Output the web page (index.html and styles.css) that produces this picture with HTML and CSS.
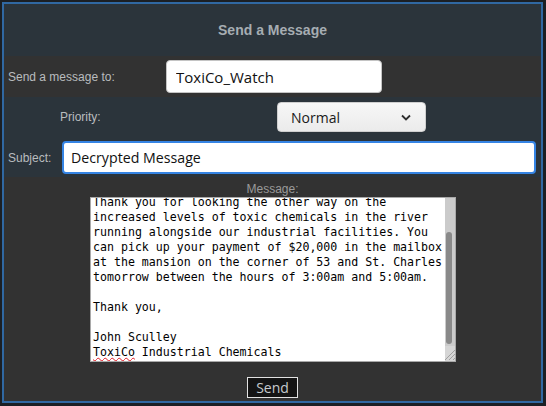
FILE: index.html
```html
<!DOCTYPE html>
<html lang="en">
<head>
<meta charset="utf-8">
<title>Send a Message</title>
<link rel="stylesheet" href="styles.css">
</head>
<body>
<div class="panel">
  <div class="title">Send a Message</div>
  <div class="row row-to">
    <label class="lbl lbl-to" for="to">Send a message to:</label>
    <input id="to" class="field field-to" type="text" value="ToxiCo_Watch">
  </div>
  <div class="row row-priority">
    <label class="lbl lbl-priority" for="priority">Priority:</label>
    <div class="select-wrap">
      <select id="priority" class="select"><option>Normal</option><option>High</option><option>Low</option></select>
      <svg class="chev" width="10" height="7" viewBox="0 0 10 7"><polyline points="1,1.5 5,5.5 9,1.5" fill="none" stroke="#2e2e2e" stroke-width="1.8"/></svg>
    </div>
  </div>
  <div class="row row-subject">
    <label class="lbl lbl-subject" for="subject">Subject:</label>
    <input id="subject" class="field field-subject" type="text" value="Decrypted Message">
  </div>
  <div class="message">
    <div class="msg-label">Message:</div>
    <div class="msg-wrap">
      <div class="msg" id="msg">Dear Mr. Daniels,

We hope this message finds you well.
Thank you for looking the other way on the
increased levels of toxic chemicals in the river
running alongside our industrial facilities. You
can pick up your payment of $20,000 in the mailbox
at the mansion on the corner of 53 and St. Charles
tomorrow between the hours of 3:00am and 5:00am.

Thank you,

John Sculley
<span class="typo">ToxiCo</span> Industrial Chemicals</div>
      <div class="scroll-track"><div class="scroll-thumb"></div></div>
      <svg class="grip" width="10" height="15" viewBox="0 0 10 15">
        <rect width="10" height="15" fill="#d6d6d6"/>
        <line x1="10" y1="4" x2="0" y2="14" stroke="#a0a0a0" stroke-width="1"/>
        <line x1="10" y1="8" x2="4" y2="14" stroke="#a0a0a0" stroke-width="1"/>
        <line x1="10" y1="12" x2="8" y2="14" stroke="#a0a0a0" stroke-width="1"/>
      </svg>
    </div>
    <button class="send" type="button">Send</button>
  </div>
</div>
<script src="script.js"></script>
</body>
</html>
```

FILE: styles.css
```css
html, body {
  margin: 0;
  background: #1b1f24;
}
body {
  padding: 2px;
}
.panel {
  width: 537px;
  height: 397px;
  border: 2px solid #3068a2;
  background: #2b343b;
  display: flex;
  flex-direction: column;
  font-family: "Liberation Sans", Arial, sans-serif;
}
.title {
  height: 52px;
  display: flex;
  align-items: center;
  justify-content: center;
  font-size: 14px;
  font-weight: bold;
  color: #a6adb2;
}
.row {
  display: flex;
  align-items: center;
  box-sizing: border-box;
}
.lbl {
  font-size: 12px;
  color: #b9bcbf;
}
.row-to {
  height: 41px;
  background: #323232;
  padding-left: 4px;
}
.lbl-to { width: 158px; }
.field {
  box-sizing: border-box;
  font-family: "Open Sans", "Noto Sans", sans-serif;
  color: #111;
  background: #fff;
  border-radius: 4px;
  outline: none;
  margin: 0;
}
.field-to {
  width: 216px;
  height: 33px;
  border: 1px solid #c4c4c4;
  padding: 0 9px;
  font-size: 15px;
}
.row-priority {
  height: 40px;
  padding-left: 56px;
}
.lbl-priority { width: 217px; }
.select-wrap {
  position: relative;
  width: 149px;
  height: 30px;
}
.select {
  appearance: none;
  -webkit-appearance: none;
  box-sizing: border-box;
  width: 100%;
  height: 100%;
  margin: 0;
  border: 1px solid #cfcfcf;
  border-radius: 4px;
  background: linear-gradient(#f7f7f7, #ebebeb);
  font-family: "Open Sans", "Noto Sans", sans-serif;
  font-size: 14px;
  color: #1a1a1a;
  padding: 0 0 0 13px;
  outline: none;
}
.chev {
  position: absolute;
  right: 15px;
  top: 12px;
  pointer-events: none;
}
.row-subject {
  height: 40px;
  padding: 4px 5px 3px 4px;
  align-items: stretch;
}
.lbl-subject {
  width: 54px;
  display: flex;
  align-items: center;
}
.field-subject {
  flex: 1;
  height: 33px;
  border: 2px solid #3584e4;
  padding: 0 7px;
  font-size: 14.2px;
}
.message {
  flex: 1;
  background: #323232;
  display: flex;
  flex-direction: column;
  align-items: center;
  padding-top: 6px;
}
.msg-label {
  font-size: 12px;
  line-height: 13px;
  margin-bottom: 1px;
  color: #9a9a9a;
}
.msg-wrap {
  position: relative;
  width: 366px;
  height: 165px;
  margin-left: 1px;
}
.msg {
  box-sizing: border-box;
  width: 100%;
  height: 100%;
  background: #fff;
  border: 1px solid #a9a9a9;
  padding: 2px 12px 1px 2px;
  font-family: "DejaVu Sans Mono", monospace;
  font-size: 11.6px;
  line-height: 15px;
  color: #000;
  white-space: pre;
  overflow: hidden;
}
.typo {
  text-decoration: underline wavy #e01b24;
  text-decoration-thickness: 1px;
  text-underline-offset: 1px;
}
.scroll-track {
  position: absolute;
  top: 1px;
  right: 1px;
  width: 10px;
  height: 148px;
  background: #cbcbcb;
}
.scroll-thumb {
  position: absolute;
  left: 1px;
  top: 34px;
  width: 6px;
  height: 112px;
  border-radius: 3px;
  background: #898989;
}
.grip {
  position: absolute;
  right: 1px;
  bottom: 1px;
  display: block;
}
.send {
  margin-top: 15px;
  width: 51px;
  height: 21px;
  padding: 0;
  background: #141414;
  border: 1px solid #e2e2e2;
  border-radius: 0;
  color: #c6cacd;
  font-family: "Open Sans", "Noto Sans", sans-serif;
  font-size: 14px;
  line-height: 19px;
}
```

FILE: script.js
```js
var m = document.getElementById('msg');
m.scrollTop = m.scrollHeight;
```
